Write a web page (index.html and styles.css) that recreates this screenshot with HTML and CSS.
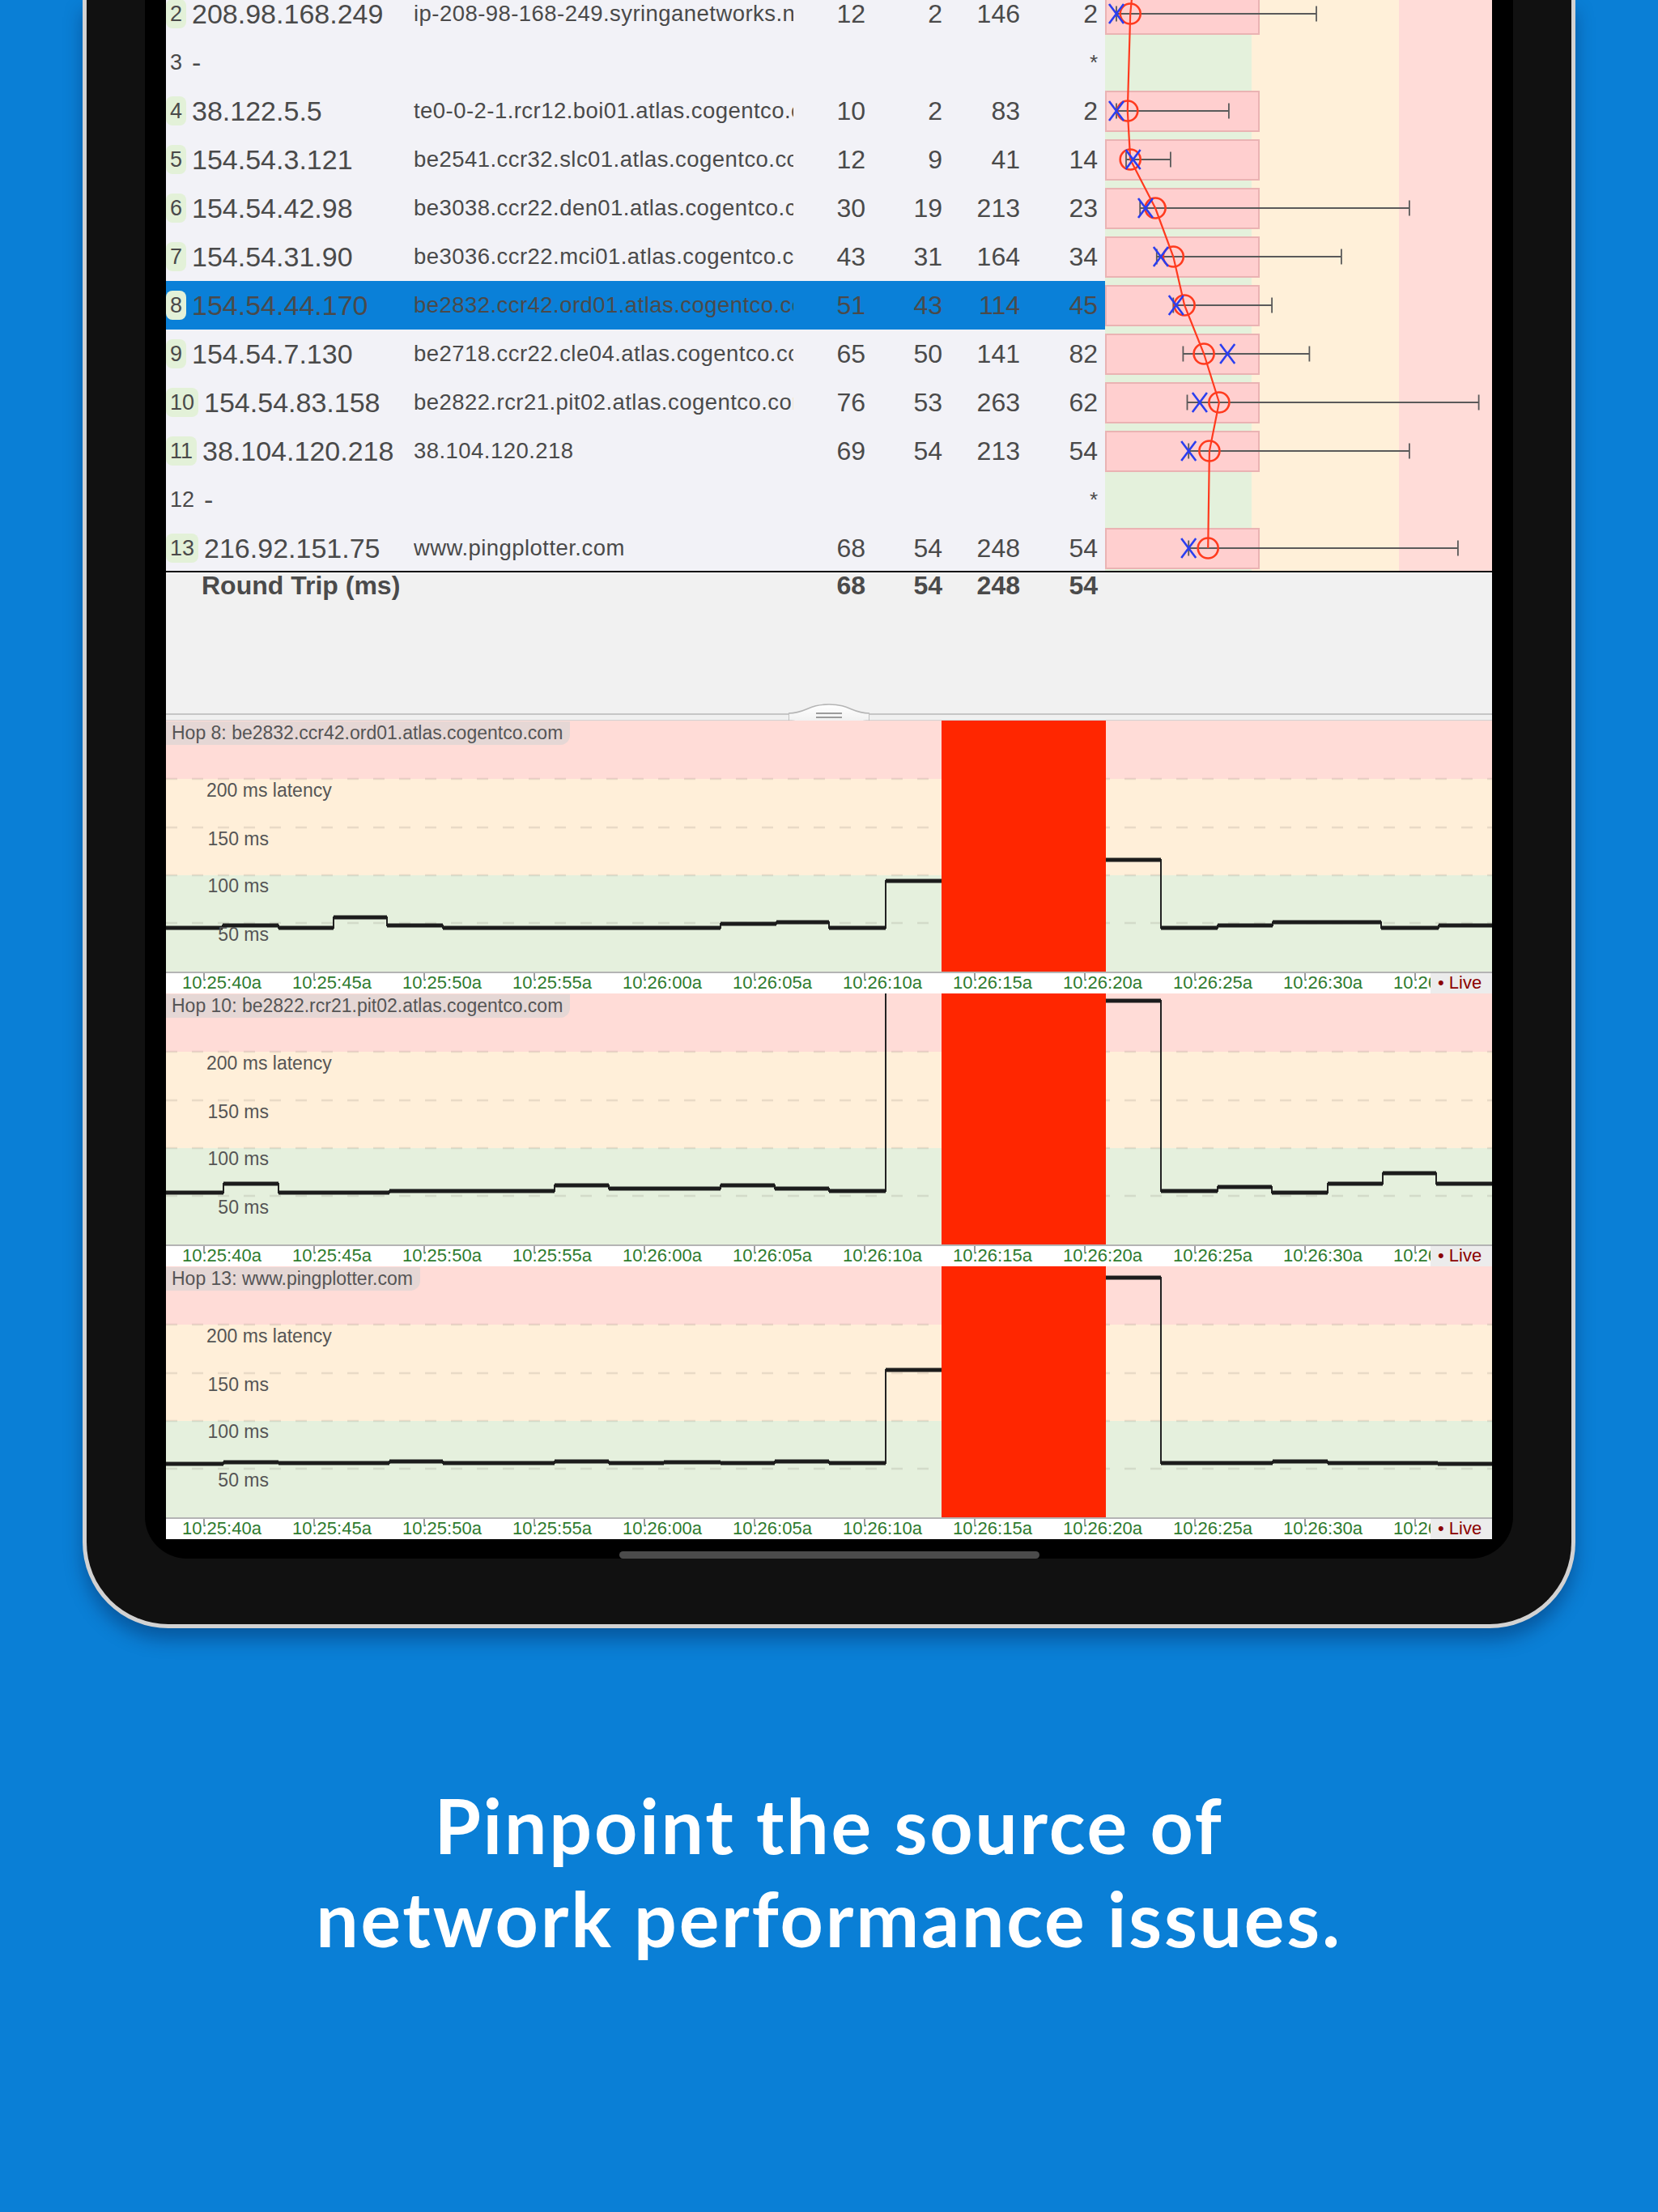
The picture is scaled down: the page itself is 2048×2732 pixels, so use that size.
FILE: index.html
```html
<!DOCTYPE html>
<html lang="en">
<head>
<meta charset="utf-8">
<title>PingPlotter</title>
<link rel="stylesheet" href="styles.css">
</head>
<body>
<div class="device">
  <div class="screen">
    <div class="app">
      <!-- trace table: hop list on the left, latency graph on the right -->
      <div class="trace">
        <div class="trace-inner">
          <div class="hops">
            <div class="hop"><span class="hop-ip"><span class="badge">2</span>208.98.168.249</span><span class="host">ip-208-98-168-249.syringanetworks.net</span><span class="num">12</span><span class="num">2</span><span class="num">146</span><span class="num">2</span></div>
            <div class="hop"><span class="hop-ip"><span class="badge empty">3</span>-</span><span class="num star">*</span></div>
            <div class="hop"><span class="hop-ip"><span class="badge">4</span>38.122.5.5</span><span class="host">te0-0-2-1.rcr12.boi01.atlas.cogentco.com</span><span class="num">10</span><span class="num">2</span><span class="num">83</span><span class="num">2</span></div>
            <div class="hop"><span class="hop-ip"><span class="badge">5</span>154.54.3.121</span><span class="host">be2541.ccr32.slc01.atlas.cogentco.com</span><span class="num">12</span><span class="num">9</span><span class="num">41</span><span class="num">14</span></div>
            <div class="hop"><span class="hop-ip"><span class="badge">6</span>154.54.42.98</span><span class="host">be3038.ccr22.den01.atlas.cogentco.com</span><span class="num">30</span><span class="num">19</span><span class="num">213</span><span class="num">23</span></div>
            <div class="hop"><span class="hop-ip"><span class="badge">7</span>154.54.31.90</span><span class="host">be3036.ccr22.mci01.atlas.cogentco.com</span><span class="num">43</span><span class="num">31</span><span class="num">164</span><span class="num">34</span></div>
            <div class="hop selected"><span class="hop-ip"><span class="badge">8</span>154.54.44.170</span><span class="host">be2832.ccr42.ord01.atlas.cogentco.com</span><span class="num">51</span><span class="num">43</span><span class="num">114</span><span class="num">45</span></div>
            <div class="hop"><span class="hop-ip"><span class="badge">9</span>154.54.7.130</span><span class="host">be2718.ccr22.cle04.atlas.cogentco.com</span><span class="num">65</span><span class="num">50</span><span class="num">141</span><span class="num">82</span></div>
            <div class="hop"><span class="hop-ip"><span class="badge">10</span>154.54.83.158</span><span class="host">be2822.rcr21.pit02.atlas.cogentco.com</span><span class="num">76</span><span class="num">53</span><span class="num">263</span><span class="num">62</span></div>
            <div class="hop"><span class="hop-ip"><span class="badge">11</span>38.104.120.218</span><span class="host">38.104.120.218</span><span class="num">69</span><span class="num">54</span><span class="num">213</span><span class="num">54</span></div>
            <div class="hop"><span class="hop-ip"><span class="badge empty">12</span>-</span><span class="num star">*</span></div>
            <div class="hop"><span class="hop-ip"><span class="badge">13</span>216.92.151.75</span><span class="host">www.pingplotter.com</span><span class="num">68</span><span class="num">54</span><span class="num">248</span><span class="num">54</span></div>
          </div>
          <svg class="trace-graph" width="478" height="720" viewBox="0 0 478 720">
            <rect x="0" y="0" width="181" height="720" fill="#e4f1dc"/>
            <rect x="181" y="0" width="182" height="720" fill="#fff0d9"/>
            <rect x="363" y="0" width="115" height="720" fill="#ffdcd8"/>
            <g fill="#ffcfcf" stroke="#eab3b3" stroke-width="2">
              <rect x="1" y="6" width="189" height="49"/>
              <rect x="1" y="126" width="189" height="49"/>
              <rect x="1" y="186" width="189" height="49"/>
              <rect x="1" y="246" width="189" height="49"/>
              <rect x="1" y="306" width="189" height="49"/>
              <rect x="1" y="366" width="189" height="49"/>
              <rect x="1" y="426" width="189" height="49"/>
              <rect x="1" y="486" width="189" height="49"/>
              <rect x="1" y="546" width="189" height="49"/>
              <rect x="1" y="666" width="189" height="49"/>
            </g>
            <path fill="none" stroke="#5a5a5a" stroke-width="1.8" d="M14,30H261M14,20.5V39.5M261,20.5V39.5M14,150H152.9M14,140.5V159.5M152.9,140.5V159.5M26,210H80.9M26,200.5V219.5M80.9,200.5V219.5M43.2,270H375.9M43.2,260.5V279.5M375.9,260.5V279.5M63.8,330H291.9M63.8,320.5V339.5M291.9,320.5V339.5M84.3,390H206.1M84.3,380.5V399.5M206.1,380.5V399.5M96.4,450H252.4M96.4,440.5V459.5M252.4,440.5V459.5M101.5,510H461.6M101.5,500.5V519.5M461.6,500.5V519.5M103.2,570H375.9M103.2,560.5V579.5M375.9,560.5V579.5M103.2,690H435.9M103.2,680.5V699.5M435.9,680.5V699.5"/>
            <polyline fill="none" stroke="#ff3a1e" stroke-width="2.2" points="37,-30 31.2,30 27.8,150 31.2,210 62.1,270 84.3,330 98.1,390 122.1,450 140.9,510 128.9,570 127.2,690"/>
            <g fill="none" stroke="#ff3a1e" stroke-width="2.6">
              <circle cx="31.2" cy="30" r="12.5"/>
              <circle cx="27.8" cy="150" r="12.5"/>
              <circle cx="31.2" cy="210" r="12.5"/>
              <circle cx="62.1" cy="270" r="12.5"/>
              <circle cx="84.3" cy="330" r="12.5"/>
              <circle cx="98.1" cy="390" r="12.5"/>
              <circle cx="122.1" cy="450" r="12.5"/>
              <circle cx="140.9" cy="510" r="12.5"/>
              <circle cx="128.9" cy="570" r="12.5"/>
              <circle cx="127.2" cy="690" r="12.5"/>
            </g>
            <path fill="none" stroke="#2a3ef0" stroke-width="2.6" d="M5,18L23,42M23,18L5,42M5,138L23,162M23,138L5,162M25.6,198L43.6,222M43.6,198L25.6,222M41,258L59,282M59,258L41,282M59.9,318L77.9,342M77.9,318L59.9,342M78.8,378L96.8,402M96.8,378L78.8,402M142.2,438L160.2,462M160.2,438L142.2,462M107.9,498L125.9,522M125.9,498L107.9,522M94.2,558L112.2,582M112.2,558L94.2,582M94.2,678L112.2,702M112.2,678L94.2,702"/>
          </svg>
        </div>
      </div>

      <div class="summary">
        <span class="label">Round Trip (ms)</span><span class="num">68</span><span class="num">54</span><span class="num">248</span><span class="num">54</span>
      </div>

      <div class="splitter">
        <svg class="grip" width="100" height="36" viewBox="0 0 100 36">
          <defs>
            <linearGradient id="gripFill" x1="0" y1="0" x2="0" y2="1">
              <stop offset="0" stop-color="#ffffff"/>
              <stop offset="1" stop-color="#e9e9e9"/>
            </linearGradient>
          </defs>
          <path d="M0,12 C22,12 24,1 50,1 C76,1 78,12 100,12 L100,21 C78,21 76,34 50,34 C24,34 22,21 0,21 Z" fill="url(#gripFill)" stroke="#b5b5b5" stroke-width="1.6"/>
          <path d="M34,12H66M34,17H66M34,22H66" stroke="#9c9c9c" stroke-width="2"/>
        </svg>
      </div>

      <!-- per-hop latency timelines -->
      <div class="chart">
        <svg class="plot" width="1638" height="310" viewBox="0 0 1638 310">
          <rect x="0" y="0" width="1638" height="72" fill="#ffdcd7"/>
          <rect x="0" y="72" width="1638" height="119" fill="#ffefd9"/>
          <rect x="0" y="191" width="1638" height="119" fill="#e5f0dd"/>
          <path class="grid" d="M0,72H1638M0,132H1638M0,191H1638M0,250H1638"/>
          <path class="step-thin" d="M0,256H70V253H139V256H207V243H273V253H342V256H685V251H754V249H819V256H889V198H958M1161,172H1229V256H1299V253H1367V249H1501V256H1572V253H1638"/>
          <path class="step" d="M0,256H70M70,253H139M139,256H207M207,243H273M273,253H342M342,256H685M685,251H754M754,249H819M819,256H889M889,198H958M1161,172H1229M1229,256H1299M1299,253H1367M1367,249H1501M1501,256H1572M1572,253H1638"/>
          <rect class="outage" x="958" y="0" width="203" height="310"/>
          <text class="ms" x="50" y="94">200 ms latency</text>
          <text class="ms end" x="127" y="154">150 ms</text>
          <text class="ms end" x="127" y="212">100 ms</text>
          <text class="ms end" x="127" y="272">50 ms</text>
        </svg>
        <span class="hop-label">Hop 8: be2832.ccr42.ord01.atlas.cogentco.com</span>
        <div class="axis">
          <div class="ticks"><span>10:25:40a</span><span>10:25:45a</span><span>10:25:50a</span><span>10:25:55a</span><span>10:26:00a</span><span>10:26:05a</span><span>10:26:10a</span><span>10:26:15a</span><span>10:26:20a</span><span>10:26:25a</span><span>10:26:30a</span><span>10:26:35a</span></div>
          <b class="live">&bull; Live</b>
        </div>
      </div>

      <div class="chart">
        <svg class="plot" width="1638" height="310" viewBox="0 0 1638 310">
          <rect x="0" y="0" width="1638" height="72" fill="#ffdcd7"/>
          <rect x="0" y="72" width="1638" height="119" fill="#ffefd9"/>
          <rect x="0" y="191" width="1638" height="119" fill="#e5f0dd"/>
          <path class="grid" d="M0,72H1638M0,132H1638M0,191H1638M0,250H1638"/>
          <path class="step-thin" d="M0,246H71V235H139V246H276V244H480V237H547V241H685V237H752V241H819V244H889V-10M1161,9H1229V244H1299V239H1366V246H1435V235H1503V222H1569V235H1638"/>
          <path class="step" d="M0,246H71M71,235H139M139,246H276M276,244H480M480,237H547M547,241H685M685,237H752M752,241H819M819,244H889M1161,9H1229M1229,244H1299M1299,239H1366M1366,246H1435M1435,235H1503M1503,222H1569M1569,235H1638"/>
          <rect class="outage" x="958" y="0" width="203" height="310"/>
          <text class="ms" x="50" y="94">200 ms latency</text>
          <text class="ms end" x="127" y="154">150 ms</text>
          <text class="ms end" x="127" y="212">100 ms</text>
          <text class="ms end" x="127" y="272">50 ms</text>
        </svg>
        <span class="hop-label">Hop 10: be2822.rcr21.pit02.atlas.cogentco.com</span>
        <div class="axis">
          <div class="ticks"><span>10:25:40a</span><span>10:25:45a</span><span>10:25:50a</span><span>10:25:55a</span><span>10:26:00a</span><span>10:26:05a</span><span>10:26:10a</span><span>10:26:15a</span><span>10:26:20a</span><span>10:26:25a</span><span>10:26:30a</span><span>10:26:35a</span></div>
          <b class="live">&bull; Live</b>
        </div>
      </div>

      <div class="chart">
        <svg class="plot" width="1638" height="310" viewBox="0 0 1638 310">
          <rect x="0" y="0" width="1638" height="72" fill="#ffdcd7"/>
          <rect x="0" y="72" width="1638" height="119" fill="#ffefd9"/>
          <rect x="0" y="191" width="1638" height="119" fill="#e5f0dd"/>
          <path class="grid" d="M0,72H1638M0,132H1638M0,191H1638M0,250H1638"/>
          <path class="step-thin" d="M0,244H71V242H139V243H276V241H342V243H480V241H547V243H615V242H685V243H752V241H819V243H889V128H958M1161,14H1229V243H1367V241H1435V243H1571V244H1638"/>
          <path class="step" d="M0,244H71M71,242H139M139,243H276M276,241H342M342,243H480M480,241H547M547,243H615M615,242H685M685,243H752M752,241H819M819,243H889M889,128H958M1161,14H1229M1229,243H1367M1367,241H1435M1435,243H1571M1571,244H1638"/>
          <rect class="outage" x="958" y="0" width="203" height="310"/>
          <text class="ms" x="50" y="94">200 ms latency</text>
          <text class="ms end" x="127" y="154">150 ms</text>
          <text class="ms end" x="127" y="212">100 ms</text>
          <text class="ms end" x="127" y="272">50 ms</text>
        </svg>
        <span class="hop-label">Hop 13: www.pingplotter.com</span>
        <div class="axis">
          <div class="ticks"><span>10:25:40a</span><span>10:25:45a</span><span>10:25:50a</span><span>10:25:55a</span><span>10:26:00a</span><span>10:26:05a</span><span>10:26:10a</span><span>10:26:15a</span><span>10:26:20a</span><span>10:26:25a</span><span>10:26:30a</span><span>10:26:35a</span></div>
          <b class="live">&bull; Live</b>
        </div>
      </div>
    </div>
    <div class="home-bar"></div>
  </div>
</div>

<p class="tagline">Pinpoint the source of<br>network performance issues.</p>
</body>
</html>
```

FILE: styles.css
```css
* {
  box-sizing: border-box;
}

html,
body {
  margin: 0;
  padding: 0;
}

body {
  width: 2048px;
  height: 2732px;
  overflow: hidden;
  background: #0a7fd6;
  font-family: "Liberation Sans", Arial, Helvetica, sans-serif;
}

/* tablet frame */
.device {
  margin: 0 102px;
  padding: 0 72px 70px;
  background: #111;
  border: 5px solid #d2d2d2;
  border-top: 0;
  border-radius: 0 0 106px 106px;
  box-shadow: 0 14px 22px rgba(0, 25, 70, 0.38);
}

.screen {
  background: #000;
  padding: 0 26px;
  border-radius: 0 0 52px 52px;
}

.home-bar {
  width: 519px;
  height: 9px;
  margin: 15px auto 11px;
  background: #4b4b4b;
  border-radius: 5px;
}

.app {
  width: 1638px;
  background: #f2f2f7;
  overflow: hidden;
  color: #4a4a4a;
}

/* trace table */
.trace {
  height: 707px;
  overflow: hidden;
  border-bottom: 2px solid #050505;
}

.trace-inner {
  display: flex;
  margin-top: -13px;
}

.hops {
  width: 1160px;
  flex: none;
}

.trace-graph {
  display: block;
  flex: none;
}

.hop {
  display: grid;
  grid-template-columns: 306px 469px 89px 95px 96px 96px;
  width: 1160px;
  height: 60px;
  align-items: center;
}

.hop.selected {
  background: #0a80d8;
}

.hop-ip {
  display: flex;
  align-items: center;
  font-size: 34px;
  white-space: nowrap;
}

.badge {
  display: inline-block;
  height: 36px;
  padding: 0 5px;
  margin-right: 7px;
  font-size: 27px;
  line-height: 36px;
  border-radius: 8px;
  background: #e3f1d8;
}

.badge.empty {
  background: transparent;
}

.host {
  font-size: 27.5px;
  letter-spacing: 0.45px;
  white-space: nowrap;
  overflow: hidden;
}

.num {
  font-size: 32px;
  text-align: right;
}

.star {
  grid-column: 6;
  font-size: 26px;
}

/* round trip totals */
.summary {
  display: grid;
  grid-template-columns: 775px 89px 95px 96px 96px;
  align-items: start;
  height: 174px;
  border-top: 1px solid #fff;
  background: #f1f1f1;
  font-size: 32px;
  font-weight: bold;
  line-height: 30px;
}

.summary .label {
  padding-left: 44px;
}

/* resizable divider */
.splitter {
  position: relative;
  height: 9px;
  background: #f0f0f0;
  border-top: 2px solid #c6c6c6;
  border-bottom: 1px solid #d2d2d2;
}

.grip {
  position: absolute;
  left: 50%;
  top: -14px;
  margin-left: -50px;
  display: block;
}

/* timeline charts */
.chart {
  position: relative;
}

.plot {
  display: block;
}

.grid {
  fill: none;
  stroke: rgba(120, 110, 100, 0.16);
  stroke-width: 2.5;
  stroke-dasharray: 14 18;
}

.step-thin {
  fill: none;
  stroke: #222;
  stroke-width: 2;
}

.step {
  fill: none;
  stroke: #1c1c1c;
  stroke-width: 5;
}

.outage {
  fill: #ff2600;
}

.ms {
  font-family: "Liberation Sans", Arial, sans-serif;
  font-size: 23px;
  fill: #555;
}

.ms.end {
  text-anchor: end;
}

.hop-label {
  position: absolute;
  left: 0;
  top: 1px;
  height: 29px;
  padding: 0 9px 0 7px;
  font-size: 23px;
  line-height: 29px;
  color: #555;
  white-space: nowrap;
  background: rgba(212, 212, 212, 0.6);
  border-radius: 0 0 12px 0;
}

.axis {
  display: flex;
  height: 27px;
  background: #fff;
  border-top: 2px solid #b4b4b4;
}

.ticks {
  display: flex;
  flex: 1;
  min-width: 0;
  padding-left: 20px;
  overflow: hidden;
}

.ticks span {
  position: relative;
  flex: none;
  width: 136px;
  font-size: 22px;
  line-height: 24px;
  color: #2e7b2e;
  white-space: nowrap;
}

/* the newest label runs under the Live marker, so it is cut at the edge */
.ticks span:last-child {
  flex: 0 1 136px;
  min-width: 0;
  overflow: hidden;
}

.ticks span::before {
  content: "";
  position: absolute;
  left: 26px;
  top: 0;
  width: 2px;
  height: 8px;
  background: #9c9c9c;
}

.live {
  flex: none;
  width: 76px;
  padding-left: 9px;
  background: #ececec;
  color: #8b0000;
  font-size: 22px;
  font-weight: normal;
  line-height: 24px;
  white-space: nowrap;
}

/* caption */
.tagline {
  margin: 186px 0 0;
  text-align: center;
  color: #fff;
  font-family: Lato, "Open Sans", sans-serif;
  font-weight: 700;
  font-size: 93px;
  letter-spacing: 2.8px;
  line-height: 115px;
}
```
